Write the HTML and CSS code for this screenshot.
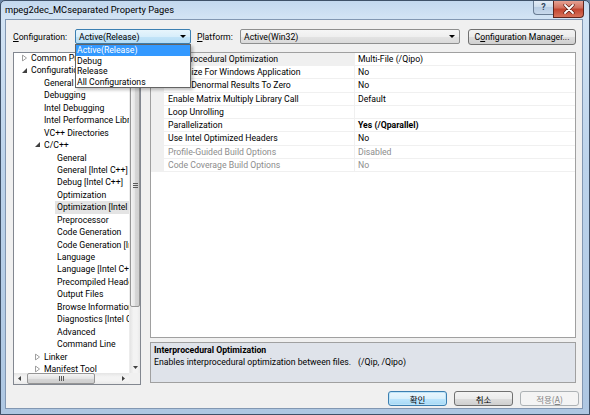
FILE: index.html
```html
<!DOCTYPE html>
<html>
<head>
<meta charset="utf-8">
<link rel="stylesheet" href="styles.css">
</head>
<body>
<div class="window">
  <div class="titlebar">
    <span class="title">mpeg2dec_MCseparated Property Pages</span>
    <div class="caption-btns">
      <div class="cap help">?</div>
      <div class="cap close">
        <svg width="12" height="10" viewBox="0 0 12 10"><path d="M2 1 L10 9 M10 1 L2 9" stroke="#5a1e16" stroke-width="3.2" stroke-linecap="round"/><path d="M2 1 L10 9 M10 1 L2 9" stroke="#ffffff" stroke-width="1.8" stroke-linecap="round"/></svg>
      </div>
    </div>
  </div>
  <div class="client">
    <div class="toprow">
      <span class="lbl lbl-config"><u>C</u>onfiguration:</span>
      <div class="combo-wrap">
        <div class="combo combo-open">
          <span class="combo-text">Active(Release)</span>
          <svg class="arrow" width="6" height="3" viewBox="0 0 6 3"><path d="M0 0 L6 0 L3 3 Z" fill="#000"/></svg>
        </div>
        <ul class="droplist">
          <li class="hl">Active(Release)</li>
          <li>Debug</li>
          <li>Release</li>
          <li>All Configurations</li>
        </ul>
      </div>
      <span class="lbl lbl-plat"><u>P</u>latform:</span>
      <div class="combo combo-plat">
        <span class="combo-text">Active(Win32)</span>
        <svg class="arrow" width="6" height="3" viewBox="0 0 6 3"><path d="M0 0 L6 0 L3 3 Z" fill="#000"/></svg>
      </div>
      <div class="btn btn-cm">C<u>o</u>nfiguration Manager...</div>
    </div>

    <div class="main">
      <div class="tree">
        <div class="tree-items">
          <div class="ti l0"><svg class="exp col" width="5" height="7" viewBox="0 0 5 7"><path d="M0.5 0.5 L4.5 3.5 L0.5 6.5 Z" fill="#fff" stroke="#a0a0a0"/></svg>Common Properties</div>
          <div class="ti l0"><svg class="exp ex" width="5" height="5" viewBox="0 0 5 5"><path d="M5 0 L5 5 L0 5 Z" fill="#404040"/></svg>Configuration Properties</div>
          <div class="ti l1">General</div>
          <div class="ti l1">Debugging</div>
          <div class="ti l1">Intel Debugging</div>
          <div class="ti l1">Intel Performance Libraries</div>
          <div class="ti l1">VC++ Directories</div>
          <div class="ti l1"><svg class="exp ex" width="5" height="5" viewBox="0 0 5 5"><path d="M5 0 L5 5 L0 5 Z" fill="#404040"/></svg>C/C++</div>
          <div class="ti l2">General</div>
          <div class="ti l2">General [Intel C++]</div>
          <div class="ti l2">Debug [Intel C++]</div>
          <div class="ti l2">Optimization</div>
          <div class="ti l2 sel">Optimization [Intel C++]</div>
          <div class="ti l2">Preprocessor</div>
          <div class="ti l2">Code Generation</div>
          <div class="ti l2">Code Generation [Intel C++]</div>
          <div class="ti l2">Language</div>
          <div class="ti l2">Language [Intel C++]</div>
          <div class="ti l2">Precompiled Headers</div>
          <div class="ti l2">Output Files</div>
          <div class="ti l2">Browse Information</div>
          <div class="ti l2">Diagnostics [Intel C++]</div>
          <div class="ti l2">Advanced</div>
          <div class="ti l2">Command Line</div>
          <div class="ti l1"><svg class="exp col" width="5" height="7" viewBox="0 0 5 7"><path d="M0.5 0.5 L4.5 3.5 L0.5 6.5 Z" fill="#fff" stroke="#a0a0a0"/></svg>Linker</div>
          <div class="ti l1"><svg class="exp col" width="5" height="7" viewBox="0 0 5 7"><path d="M0.5 0.5 L4.5 3.5 L0.5 6.5 Z" fill="#fff" stroke="#a0a0a0"/></svg>Manifest Tool</div>
        </div>
        <div class="vscroll">
          <div class="sb-arrow"><svg width="5" height="3" viewBox="0 0 5 3"><path d="M0 3 L5 3 L2.5 0 Z" fill="#404040"/></svg></div>
          <div class="vthumb"><svg width="5" height="5" viewBox="0 0 5 5"><path d="M0 0.5 H5 M0 2.5 H5 M0 4.5 H5" stroke="#5a5a5a" stroke-width="1"/></svg></div>
          <div class="vtrack"></div>
          <div class="sb-arrow"><svg width="5" height="3" viewBox="0 0 5 3"><path d="M0 0 L5 0 L2.5 3 Z" fill="#404040"/></svg></div>
        </div>
        <div class="hscroll">
          <div class="sb-arrow"><svg width="3" height="5" viewBox="0 0 3 5"><path d="M3 0 L3 5 L0 2.5 Z" fill="#404040"/></svg></div>
          <div class="hthumb"><svg width="5" height="5" viewBox="0 0 5 5"><path d="M0.5 0 V5 M2.5 0 V5 M4.5 0 V5" stroke="#5a5a5a" stroke-width="1"/></svg></div>
          <div class="htrack"></div>
          <div class="sb-arrow"><svg width="3" height="5" viewBox="0 0 3 5"><path d="M0 0 L0 5 L3 2.5 Z" fill="#404040"/></svg></div>
        </div>
        <div class="corner"></div>
      </div>

      <div class="rightpane">
        <div class="pgrid">
          <div class="prow selrow"><div class="gut"></div><div class="pname">Interprocedural Optimization</div><div class="pval">Multi-File (/Qipo)</div></div>
          <div class="prow"><div class="gut"></div><div class="pname">Optimize For Windows Application</div><div class="pval">No</div></div>
          <div class="prow"><div class="gut"></div><div class="pname">Flush Denormal Results To Zero</div><div class="pval">No</div></div>
          <div class="prow"><div class="gut"></div><div class="pname">Enable Matrix Multiply Library Call</div><div class="pval">Default</div></div>
          <div class="prow"><div class="gut"></div><div class="pname">Loop Unrolling</div><div class="pval"></div></div>
          <div class="prow"><div class="gut"></div><div class="pname">Parallelization</div><div class="pval bold">Yes (/Qparallel)</div></div>
          <div class="prow"><div class="gut"></div><div class="pname">Use Intel Optimized Headers</div><div class="pval">No</div></div>
          <div class="prow dis"><div class="gut"></div><div class="pname">Profile-Guided Build Options</div><div class="pval">Disabled</div></div>
          <div class="prow dis"><div class="gut"></div><div class="pname">Code Coverage Build Options</div><div class="pval">No</div></div>
        </div>
        <div class="desc">
          <div class="desc-title">Interprocedural Optimization</div>
          <div class="desc-text"><span class="desc-main">Enables interprocedural optimization between files.</span><span>(/Qip, /Qipo)</span></div>
        </div>
      </div>
    </div>

    <div class="buttons">
      <div class="btn btn-ok">확인</div>
      <div class="btn">취소</div>
      <div class="btn btn-dis">적용(<u>A</u>)</div>
    </div>
  </div>
</div>
</body>
</html>
```

FILE: styles.css
```css
* { box-sizing: border-box; }
body {
  margin: 0;
  font-family: Roboto, "Noto Sans CJK KR", sans-serif;
  font-size: 8.7px;
  color: #000;
  background: #6d87a6;
}
.window {
  width: 590px;
  height: 415px;
  display: flex;
  flex-direction: column;
  background: linear-gradient(180deg, #c3d8ee 0%, #d2e3f4 4%, #bcd3eb 40%, #aec7e2 100%);
  border: 1px solid #3f5168;
  border-radius: 5px 5px 0 0;
  overflow: hidden;
}
.titlebar {
  height: 18px;
  display: flex;
  justify-content: space-between;
  align-items: flex-start;
  padding-left: 4px;
}
.title {
  font-size: 9.3px;
  line-height: 18px;
  color: #000;
}
.caption-btns {
  display: flex;
  margin-right: 5px;
  margin-top: -1px;
}
.cap {
  display: flex;
  align-items: center;
  justify-content: center;
}
.cap.help {
  width: 20px;
  height: 15px;
  border: 1px solid #6a7d94;
  border-top: none;
  border-right: none;
  border-radius: 0 0 0 4px;
  background: linear-gradient(#e6eef7, #cddcec 50%, #b7cbe2 51%, #c8d9ec);
  color: #33475f;
  font-size: 9px;
  font-weight: bold;
}
.cap.close {
  width: 31px;
  height: 18px;
  border: 1px solid #5e241c;
  border-top: none;
  border-radius: 0 0 4px 0;
  background: linear-gradient(#e9a99b, #d2715f 45%, #c24530 55%, #d7725a);
}
.client {
  flex: 1;
  margin: 0 6px 5px 4px;
  background: #f0f0f0;
  border: 1px solid #8297b2;
  padding: 9px 6px 0 7px;
  display: flex;
  flex-direction: column;
}
.toprow {
  display: flex;
  align-items: center;
  height: 15px;
}
.lbl { flex-shrink: 0; white-space: nowrap; }
.lbl-config { width: 62px; }
.lbl-plat { width: 43px; margin-left: 6px; }
.combo-wrap {
  position: relative;
  width: 116px;
  height: 15px;
  flex-shrink: 0;
  z-index: 10;
}
.combo {
  height: 15px;
  display: flex;
  align-items: center;
  justify-content: space-between;
  padding: 0 4px 0 3px;
  border-radius: 2px;
  flex-shrink: 0;
}
.combo-open {
  border: 1px solid #3c7fb1;
  background: linear-gradient(#e8f5fc, #d8eefb 50%, #c3e4f8 51%, #b4dcf5);
}
.combo-plat {
  width: 220px;
  border: 1px solid #8e8f8f;
  background: linear-gradient(#f6f6f6, #efefef 50%, #e3e3e3 51%, #dadada);
}
.arrow { flex-shrink: 0; }
.droplist {
  position: absolute;
  top: 15px;
  left: 0;
  width: 116px;
  height: 44px;
  margin: 0;
  padding: 0;
  list-style: none;
  background: #fff;
  border: 1px solid #646464;
  box-shadow: 2px 2px 3px rgba(0,0,0,0.25);
}
.droplist li {
  height: 10.5px;
  line-height: 10.5px;
  padding-left: 1px;
  white-space: nowrap;
}
.droplist li.hl {
  background: #3399ff;
  color: #fff;
}
.btn {
  height: 15px;
  display: flex;
  align-items: center;
  justify-content: center;
  border: 1px solid #707070;
  border-radius: 3px;
  background: linear-gradient(#f3f3f3, #ebebeb 50%, #dddddd 51%, #cfcfcf);
  white-space: nowrap;
  flex-shrink: 0;
}
.btn-cm {
  width: 108px;
  margin-left: 8px;
  height: 16px;
}
.main {
  display: flex;
  margin-top: 8px;
  height: 333px;
}
.tree {
  width: 128px;
  height: 333px;
  flex-shrink: 0;
  border: 1px solid #828790;
  background: #fff;
  display: grid;
  grid-template-columns: 1fr 11px;
  grid-template-rows: 1fr 11px;
}
.tree-items {
  overflow: hidden;
  padding-top: 0;
  margin-top: -1px;
}
.ti {
  position: relative;
  height: 12.44px;
  line-height: 12.44px;
  white-space: nowrap;
  color: #000;
}
.ti.l0 { padding-left: 17px; }
.ti.l1 { padding-left: 30px; }
.ti.l2 { padding-left: 43px; }
.ti.sel {
  background: linear-gradient(to right, transparent 41px, #e4e4e4 41px);
}
.exp {
  position: absolute;
  top: 50%;
}
.exp.col { transform: translateY(-50%); }
.exp.ex { transform: translateY(-60%); }
.l0 .exp { left: 8px; }
.l1 .exp { left: 21px; }
.vscroll {
  display: flex;
  flex-direction: column;
  background: linear-gradient(to right, #e4e4e4, #f3f3f3 35%, #f3f3f3 70%, #e9e9e9);
  border-left: 1px solid #ececec;
}
.sb-arrow {
  width: 11px;
  height: 11px;
  flex-shrink: 0;
  display: flex;
  align-items: center;
  justify-content: center;
}
.vthumb {
  height: 243px;
  border: 1px solid #959595;
  border-radius: 2px;
  background: linear-gradient(to right, #f4f4f4, #e4e4e4 50%, #d6d6d6 51%, #cfcfcf);
  display: flex;
  align-items: center;
  justify-content: center;
}
.vtrack { flex: 1; }
.hscroll {
  display: flex;
  align-items: stretch;
  background: linear-gradient(#e4e4e4, #f3f3f3 35%, #f3f3f3 70%, #e9e9e9);
}
.hthumb {
  width: 68px;
  margin-left: 2px;
  border: 1px solid #959595;
  border-radius: 2px;
  background: linear-gradient(#f4f4f4, #e4e4e4 50%, #d6d6d6 51%, #cfcfcf);
  display: flex;
  align-items: center;
  justify-content: center;
}
.htrack { flex: 1; }
.corner { background: #f0f0f0; }
.rightpane {
  width: 426px;
  margin-left: 9px;
  display: flex;
  flex-direction: column;
}
.pgrid {
  height: 286px;
  border: 1px solid #a0a0a0;
  background: #fff;
}
.prow {
  display: flex;
  height: 13.22px;
  line-height: 12.22px;
  white-space: nowrap;
}
.gut {
  width: 13px;
  flex-shrink: 0;
  background: #f0f0f0;
}
.pname {
  width: 191px;
  flex-shrink: 0;
  padding-left: 4px;
  border-right: 1px solid #f0f0f0;
  border-bottom: 1px solid #f0f0f0;
  overflow: hidden;
}
.pval {
  flex: 1;
  padding-left: 3px;
  border-bottom: 1px solid #f0f0f0;
}
.selrow .pname { background: #f0f0f0; }
.bold { font-weight: bold; }
.dis .pname, .dis .pval { color: #8d8d8d; }
.desc {
  height: 41px;
  margin-top: 4px;
  border: 1px solid #a0a0a0;
  background: #dfe3ea;
  padding: 1px 3px;
}
.desc-title {
  font-weight: bold;
  line-height: 12px;
}
.desc-text {
  display: flex;
  line-height: 13px;
  white-space: nowrap;
}
.desc-main { width: 204px; flex-shrink: 0; }
.buttons {
  display: flex;
  justify-content: flex-end;
  gap: 7px;
  margin-top: 6px;
  margin-right: -3px;
}
.buttons .btn {
  width: 59px;
  font-family: "Noto Sans CJK KR", Roboto, sans-serif;
  font-size: 8.5px;
}
.btn-ok {
  border-color: #3c7fb1;
  background: linear-gradient(#eaf6fd, #d9f0fc 50%, #bee6fd 51%, #a7d9f5);
  box-shadow: inset 0 0 0 1px #bde4f8;
}
.btn-dis {
  border-color: #adb2b5;
  background: #f4f4f4;
  color: #838383;
}
```
